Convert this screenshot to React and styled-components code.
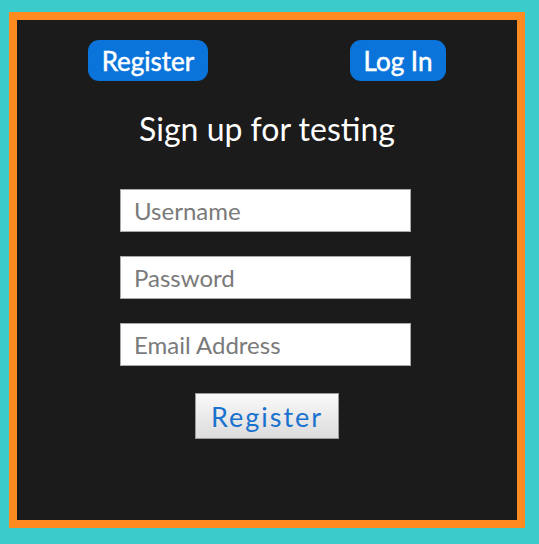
import React from "react";
import styled, { createGlobalStyle } from "styled-components";

const GlobalStyle = createGlobalStyle`
  html, body {
    margin: 0;
    background: #3bcbcb;
  }
  body {
    padding: 12px 0 0 9px;
    height: 544px;
    box-sizing: border-box;
    font-family: "Lato", "Open Sans", sans-serif;
  }
`;

const Frame = styled.div`
  width: 500px;
  height: 500px;
  border: 8px solid #ff8a1f;
  background: #1b1b1b;
  display: flex;
  flex-direction: column;
  align-items: center;
`;

const NavRow = styled.div`
  align-self: stretch;
  display: flex;
  justify-content: space-around;
  margin-top: 20px;
`;

const NavButton = styled.button`
  width: ${(props) => props.w}px;
  height: 41px;
  border: none;
  border-radius: 11px;
  background: #0a74da;
  color: #fff;
  font-family: inherit;
  font-size: 26px;
  font-weight: 400;
  -webkit-text-stroke: 0.5px #fff;
  padding: 0;
  cursor: pointer;
`;

const Title = styled.h1`
  margin: 30px 0 0 0;
  color: #fff;
  font-size: 32px;
  font-weight: 400;
  line-height: 36px;
`;

const Form = styled.form`
  display: flex;
  flex-direction: column;
  align-items: center;
  gap: 24px;
  margin-top: 42px;
  padding-right: 3px;
`;

const Field = styled.input`
  width: 291px;
  height: 43px;
  box-sizing: border-box;
  border: 1px solid #aaa;
  background: #fff;
  padding: 0 13px;
  font-family: inherit;
  font-size: 24px;
  color: #333;
  outline: none;
  &::placeholder {
    color: #7a7a7a;
  }
`;

const Submit = styled.button`
  width: 144px;
  height: 46px;
  margin: 3px 0 0 3px;
  border: 1px solid #9a9a9a;
  background: linear-gradient(#f9f9f9, #dcdcdc);
  color: #1a72cf;
  font-family: inherit;
  font-size: 27px;
  letter-spacing: 2px;
  padding: 0;
  cursor: pointer;
`;

export default function App() {
  return (
    <>
      <GlobalStyle />
      <Frame>
        <NavRow>
          <NavButton w={120}>Register</NavButton>
          <NavButton w={96}>Log In</NavButton>
        </NavRow>
        <Title>Sign up for testing</Title>
        <Form onSubmit={(e) => e.preventDefault()}>
          <Field type="text" placeholder="Username" />
          <Field type="password" placeholder="Password" />
          <Field type="email" placeholder="Email Address" />
          <Submit type="submit">Register</Submit>
        </Form>
      </Frame>
    </>
  );
}
